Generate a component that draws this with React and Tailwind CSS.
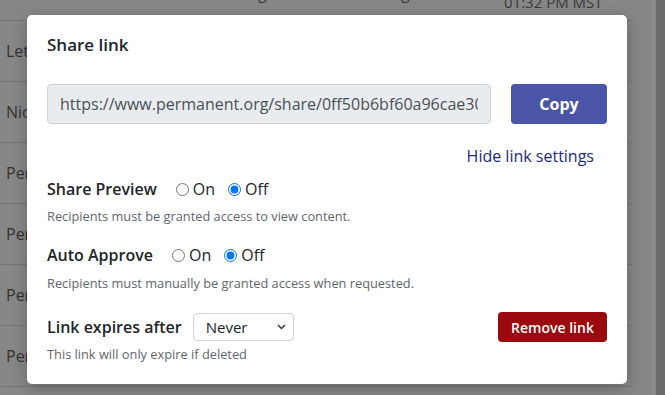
import { useState } from "react";

const rows = ["Letter to family", "Nicole's photos", "Personal archive", "Personal notes", "Personal records", "Personal files"];

const RadioPair = ({ name, value, onChange }) => (
  <div className="flex items-center gap-[13px] text-[16px] text-[#212529]">
    {["On", "Off"].map((opt) => (
      <label key={opt} className="flex items-center gap-[4px]">
        <input
          type="radio"
          name={name}
          className="m-0 w-[13px] h-[13px]"
          checked={value === opt}
          onChange={() => onChange(opt)}
        />
        <span>{opt}</span>
      </label>
    ))}
  </div>
);

const App = () => {
  const [preview, setPreview] = useState("Off");
  const [approve, setApprove] = useState("Off");

  return (
    <div className="relative w-[665px] h-[395px] overflow-hidden bg-[#878787] font-['Open_Sans',sans-serif]">
      <div className="flex h-full">
        <div className="w-[632px] -mt-[40px]">
          <div className="h-[61px] border-b border-[#767676] relative">
            <span className="absolute left-[258px] bottom-[15px] text-[16px] text-[#3a3a3a]">g</span>
            <span className="absolute left-[401px] bottom-[15px] text-[16px] text-[#3a3a3a]">g</span>
            <span className="absolute left-[504px] bottom-[7px] text-[15px] text-[#3a3a3a]">01:32 PM MST</span>
          </div>
          {rows.map((r) => (
            <div key={r} className="flex items-center h-[61px] px-[6px] border-b border-[#767676] text-[16px] text-[#333]">
              {r}
            </div>
          ))}
        </div>
        <div className="w-[20px] h-full" />
        <div className="w-[4px] h-full border-l border-[#939393]" />
        <div className="flex-1 h-full bg-[#6b6b6b]" />
      </div>

      <div className="absolute left-[27px] top-[15px] w-[600px] h-[369px] bg-white rounded-[5px] shadow-[0_4px_16px_rgba(0,0,0,0.25)] px-5 pt-5">
        <h2 className="text-[17px] leading-5 font-semibold text-[#212529]">Share link</h2>

        <div className="flex gap-5 mt-[29px]">
          <div className="w-[444px] h-[40px] flex items-center px-3 bg-[#e9ecef] border border-[#ced4da] rounded-[4px] text-[16px] text-[#495057]">
            <span className="block overflow-hidden whitespace-nowrap">
              https://www.permanent.org/share/0ff50b6bf60a96cae30d1e
            </span>
          </div>
          <button className="w-[96px] h-[40px] bg-[#4a55a8] text-white text-[16px] font-bold rounded-[4px]">
            Copy
          </button>
        </div>

        <div className="flex justify-end mt-[22px] pr-[13px]">
          <span className="text-[16px] leading-5 text-[#1b2a80]">Hide link settings</span>
        </div>

        <div className="mt-[11px] flex items-center gap-[19px]">
          <span className="text-[16px] leading-5 font-semibold text-[#212529]">Share Preview</span>
          <RadioPair name="preview" value={preview} onChange={setPreview} />
        </div>
        <p className="mt-[7px] text-[12.8px] leading-4 text-[#60666d]">Recipients must be granted access to view content.</p>

        <div className="mt-[19px] flex items-center gap-[19px]">
          <span className="text-[16px] leading-5 font-semibold text-[#212529]">Auto Approve</span>
          <RadioPair name="approve" value={approve} onChange={setApprove} />
        </div>
        <p className="mt-[8px] text-[12.8px] leading-4 text-[#60666d]">Recipients must manually be granted access when requested.</p>

        <div className="mt-[21px] flex items-center justify-between">
          <div className="flex items-center gap-[11px]">
            <span className="text-[16px] leading-5 font-semibold text-[#212529]">Link expires after</span>
            <div className="relative w-[101px] h-[28px] border border-[#ced4da] rounded-[4px] flex items-center pl-[12px] text-[15px] text-[#212529]">
              Never
              <svg className="absolute right-[7px] top-[10px]" width="9" height="6" viewBox="0 0 9 6" fill="none">
                <path d="M1 1l3.5 3.5L8 1" stroke="#333" strokeWidth="1.5" />
              </svg>
            </div>
          </div>
          <button className="w-[109px] h-[30px] bg-[#9a0a0e] text-white text-[14px] font-semibold rounded-[4px]">
            Remove link
          </button>
        </div>
        <p className="mt-[4px] text-[12.8px] leading-4 text-[#60666d]">This link will only expire if deleted</p>
      </div>
    </div>
  );
};

export default App;
